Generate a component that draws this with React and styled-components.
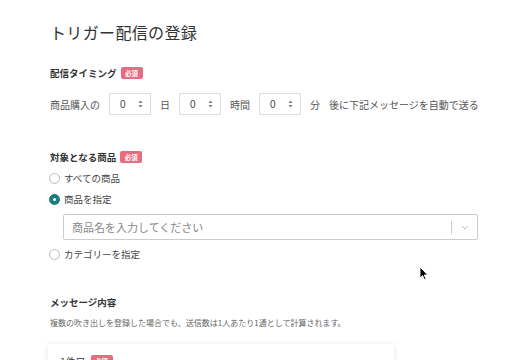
import React from "react";
import styled, { createGlobalStyle } from "styled-components";

const Global = createGlobalStyle`
  html, body { margin: 0; padding: 0; background: #fff; }
  body { font-family: "Noto Sans CJK JP", "Noto Sans", sans-serif; color: #333; }
`;

const Page = styled.div`
  position: relative;
  width: 532px;
  height: 360px;
  overflow: hidden;
  padding: 20px 0 0 50px;
  box-sizing: border-box;
`;

const Title = styled.h1`
  margin: 0 0 22px;
  font-size: 16px;
  letter-spacing: 0.35px;
  line-height: 24px;
  font-weight: 400;
  color: #333;
`;

const Label = styled.div`
  display: flex;
  align-items: center;
  gap: 4px;
  height: 14px;
  font-size: 9.5px;
  font-weight: 700;
  color: #333;
  margin-top: ${(p) => p.$mt || 0}px;
`;

const Badge = styled.span`
  display: inline-flex;
  align-items: center;
  justify-content: center;
  width: 22px;
  height: 12px;
  border-radius: 2px;
  background: #ea6a80;
  color: #fff;
  font-size: 6.5px;
  font-weight: 700;
`;

const TimingRow = styled.div`
  display: flex;
  align-items: center;
  gap: 9px;
  margin-top: 13px;
  height: 22px;
  font-size: 10px;
  color: #555;
`;

const Text = styled.span`
  white-space: nowrap;
  margin-left: ${(p) => p.$ml || 0}px;
`;

const NumBox = styled.div`
  width: 42px;
  height: 22px;
  box-sizing: border-box;
  border: 1px solid #ddd;
  display: flex;
  align-items: center;
  justify-content: space-between;
  padding: 0 7px 0 10px;
  font-size: 10px;
  color: #444;
  font-family: "Liberation Sans", sans-serif;
`;

const Spinner = () => (
  <svg width="5" height="8" viewBox="0 0 5 8">
    <path d="M2.5 0.5 L4.5 3 L0.5 3 Z" fill="#777" />
    <path d="M2.5 7.5 L4.5 5 L0.5 5 Z" fill="#777" />
  </svg>
);

const RadioRow = styled.label`
  display: flex;
  align-items: center;
  gap: 4px;
  height: 16px;
  margin-top: ${(p) => p.$mt || 0}px;
  margin-left: -1px;
  font-size: 9.5px;
  color: #444;
`;

const RadioDot = styled.span`
  width: 11px;
  height: 11px;
  box-sizing: border-box;
  border-radius: 50%;
  border: 1px solid ${(p) => (p.$on ? "#1d7b82" : "#bbb")};
  background: ${(p) => (p.$on ? "#1d7b82" : "#fff")};
  display: flex;
  align-items: center;
  justify-content: center;
  &::after {
    content: "";
    width: 3px;
    height: 3px;
    border-radius: 50%;
    background: #fff;
    display: ${(p) => (p.$on ? "block" : "none")};
  }
`;

const Select = styled.div`
  margin: 7px 0 0 13px;
  width: 415px;
  height: 26px;
  box-sizing: border-box;
  border: 1px solid #ccc;
  border-radius: 2px;
  display: flex;
  align-items: center;
`;

const Placeholder = styled.span`
  flex: 1;
  padding-left: 8px;
  font-size: 11px;
  color: #888;
`;

const Sep = styled.span`
  width: 1px;
  height: 13px;
  background: #ccc;
`;

const Chevron = styled.span`
  width: 25px;
  display: flex;
  justify-content: center;
`;

const Sub = styled.div`
  margin-top: 8px;
  font-size: 8px;
  line-height: 12px;
  color: #666;
`;

const Card = styled.div`
  margin: 15px 0 0 -2px;
  width: 346px;
  height: 60px;
  background: #fff;
  box-shadow: 0 1px 6px rgba(0, 0, 0, 0.1);
  border-radius: 3px;
  padding: 10px 14px 0 12px;
  box-sizing: border-box;
  display: flex;
  align-items: flex-start;
`;

const CardHead = styled.div`
  flex: 1;
  display: flex;
  align-items: center;
  gap: 5px;
  height: 14px;
  font-size: 10px;
  color: #333;
`;

const CardToggle = styled.span`
  display: flex;
  align-items: center;
  height: 14px;
`;

const Cursor = styled.svg`
  position: absolute;
  left: 419px;
  top: 266px;
`;

export default function App() {
  return (
    <>
      <Global />
      <Page>
        <Title>トリガー配信の登録</Title>

        <Label>
          配信タイミング<Badge>必須</Badge>
        </Label>
        <TimingRow>
          <Text>商品購入の</Text>
          <NumBox>
            0<Spinner />
          </NumBox>
          <Text>日</Text>
          <NumBox>
            0<Spinner />
          </NumBox>
          <Text>時間</Text>
          <NumBox>
            0<Spinner />
          </NumBox>
          <Text>分</Text>
          <Text>後に下記メッセージを自動で送る</Text>
        </TimingRow>

        <Label $mt={35}>
          対象となる商品<Badge>必須</Badge>
        </Label>
        <RadioRow $mt={6}>
          <RadioDot />
          すべての商品
        </RadioRow>
        <RadioRow $mt={5}>
          <RadioDot $on />
          商品を指定
        </RadioRow>
        <Select>
          <Placeholder>商品名を入力してください</Placeholder>
          <Sep />
          <Chevron>
            <svg width="8" height="5" viewBox="0 0 8 5">
              <path d="M1 1 L4 4 L7 1" fill="none" stroke="#bbb" strokeWidth="1" />
            </svg>
          </Chevron>
        </Select>
        <RadioRow $mt={6}>
          <RadioDot />
          カテゴリーを指定
        </RadioRow>

        <Label $mt={33}>メッセージ内容</Label>
        <Sub>複数の吹き出しを登録した場合でも、送信数は1人あたり1通として計算されます。</Sub>

        <Card>
          <CardHead>
            1件目<Badge>必須</Badge>
          </CardHead>
          <CardToggle>
            <svg width="8" height="5" viewBox="0 0 8 5">
              <path d="M1 4 L4 1 L7 4" fill="none" stroke="#666" strokeWidth="1" />
            </svg>
          </CardToggle>
        </Card>

        <Cursor width="10" height="15" viewBox="0 0 10 15">
          <path d="M1 1 L1 12 L3.6 9.6 L5.4 13.6 L7 12.9 L5.3 9 L8.8 9 Z" fill="#000" stroke="#fff" strokeWidth="0.9" strokeLinejoin="round" />
        </Cursor>
      </Page>
    </>
  );
}
